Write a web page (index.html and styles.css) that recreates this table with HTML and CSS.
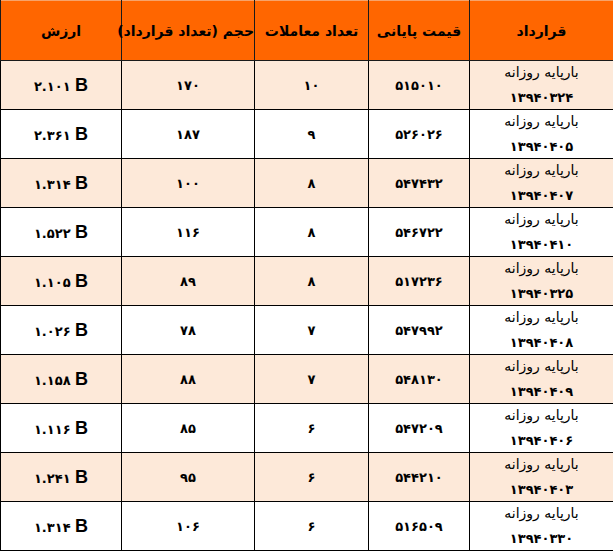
FILE: index.html
```html
<!DOCTYPE html>
<html lang="fa">
<head>
<meta charset="utf-8">
<title>معاملات بارپایه روزانه</title>
<link rel="stylesheet" href="styles.css">
</head>
<body>
<table class="trades" dir="rtl">
  <colgroup>
    <col class="c-contract">
    <col class="c-price">
    <col class="c-count">
    <col class="c-volume">
    <col class="c-value">
  </colgroup>
  <thead>
    <tr>
      <th>قرارداد</th>
      <th>قیمت پایانی</th>
      <th>تعداد معاملات</th>
      <th>حجم (تعداد قرارداد)</th>
      <th>ارزش</th>
    </tr>
  </thead>
  <tbody>
    <tr class="alt">
      <td class="contract"><div class="contract-box"><span class="name">بارپایه روزانه</span><span class="code">۱۳۹۴۰۳۲۴</span></div></td>
      <td class="num">۵۱۵۰۱۰</td><td class="num">۱۰</td><td class="num">۱۷۰</td>
      <td class="val"><span dir="ltr">۲.۱۰۱ <b>B</b></span></td>
    </tr>
    <tr>
      <td class="contract"><div class="contract-box"><span class="name">بارپایه روزانه</span><span class="code">۱۳۹۴۰۴۰۵</span></div></td>
      <td class="num">۵۲۶۰۲۶</td><td class="num">۹</td><td class="num">۱۸۷</td>
      <td class="val"><span dir="ltr">۲.۳۶۱ <b>B</b></span></td>
    </tr>
    <tr class="alt">
      <td class="contract"><div class="contract-box"><span class="name">بارپایه روزانه</span><span class="code">۱۳۹۴۰۴۰۷</span></div></td>
      <td class="num">۵۴۷۴۳۲</td><td class="num">۸</td><td class="num">۱۰۰</td>
      <td class="val"><span dir="ltr">۱.۳۱۴ <b>B</b></span></td>
    </tr>
    <tr>
      <td class="contract"><div class="contract-box"><span class="name">بارپایه روزانه</span><span class="code">۱۳۹۴۰۴۱۰</span></div></td>
      <td class="num">۵۴۶۷۲۲</td><td class="num">۸</td><td class="num">۱۱۶</td>
      <td class="val"><span dir="ltr">۱.۵۲۲ <b>B</b></span></td>
    </tr>
    <tr class="alt">
      <td class="contract"><div class="contract-box"><span class="name">بارپایه روزانه</span><span class="code">۱۳۹۴۰۳۲۵</span></div></td>
      <td class="num">۵۱۷۲۳۶</td><td class="num">۸</td><td class="num">۸۹</td>
      <td class="val"><span dir="ltr">۱.۱۰۵ <b>B</b></span></td>
    </tr>
    <tr>
      <td class="contract"><div class="contract-box"><span class="name">بارپایه روزانه</span><span class="code">۱۳۹۴۰۴۰۸</span></div></td>
      <td class="num">۵۴۷۹۹۲</td><td class="num">۷</td><td class="num">۷۸</td>
      <td class="val"><span dir="ltr">۱.۰۲۶ <b>B</b></span></td>
    </tr>
    <tr class="alt">
      <td class="contract"><div class="contract-box"><span class="name">بارپایه روزانه</span><span class="code">۱۳۹۴۰۴۰۹</span></div></td>
      <td class="num">۵۴۸۱۳۰</td><td class="num">۷</td><td class="num">۸۸</td>
      <td class="val"><span dir="ltr">۱.۱۵۸ <b>B</b></span></td>
    </tr>
    <tr>
      <td class="contract"><div class="contract-box"><span class="name">بارپایه روزانه</span><span class="code">۱۳۹۴۰۴۰۶</span></div></td>
      <td class="num">۵۴۷۲۰۹</td><td class="num">۶</td><td class="num">۸۵</td>
      <td class="val"><span dir="ltr">۱.۱۱۶ <b>B</b></span></td>
    </tr>
    <tr class="alt">
      <td class="contract"><div class="contract-box"><span class="name">بارپایه روزانه</span><span class="code">۱۳۹۴۰۴۰۳</span></div></td>
      <td class="num">۵۴۴۲۱۰</td><td class="num">۶</td><td class="num">۹۵</td>
      <td class="val"><span dir="ltr">۱.۲۴۱ <b>B</b></span></td>
    </tr>
    <tr>
      <td class="contract"><div class="contract-box"><span class="name">بارپایه روزانه</span><span class="code">۱۳۹۴۰۳۳۰</span></div></td>
      <td class="num">۵۱۶۵۰۹</td><td class="num">۶</td><td class="num">۱۰۶</td>
      <td class="val"><span dir="ltr">۱.۳۱۴ <b>B</b></span></td>
    </tr>
  </tbody>
</table>
</body>
</html>
```

FILE: styles.css
```css
html, body {
  margin: 0;
  padding: 0;
  background: #ffffff;
}

.trades {
  border-collapse: collapse;
  table-layout: fixed;
  width: 613px;
  font-family: "DejaVu Sans", "Noto Sans", sans-serif;
  color: #000;
}

.c-contract { width: 144px; }
.c-price { width: 101px; }
.c-count { width: 114px; }
.c-volume { width: 133px; }
.c-value { width: 121px; }

.trades th {
  height: 59px;
  padding: 0;
  background: #ff6600;
  border: 1px solid #1a1a1a;
  border-top-color: #f7a36a;
  font-size: 14px;
  font-weight: bold;
  text-align: center;
  vertical-align: middle;
  white-space: nowrap;
}

.trades td {
  height: 48px;
  padding: 0;
  border: 1px solid #000;
  text-align: center;
  vertical-align: middle;
  background: #ffffff;
}

.trades tr.alt td {
  background: #fde9d9;
}

.num {
  font-size: 13px;
  font-weight: bold;
}

.val {
  font-size: 13px;
  font-weight: bold;
}

.val b {
  font-family: "Liberation Sans", Arial, sans-serif;
  font-size: 18px;
  font-weight: bold;
}

.contract-box {
  height: 48px;
  display: flex;
  flex-direction: column;
  justify-content: center;
  align-items: center;
  line-height: 26px;
}

.contract .name {
  font-size: 14px;
  font-weight: normal;
}

.contract .code {
  font-size: 13px;
  font-weight: bold;
}
```
